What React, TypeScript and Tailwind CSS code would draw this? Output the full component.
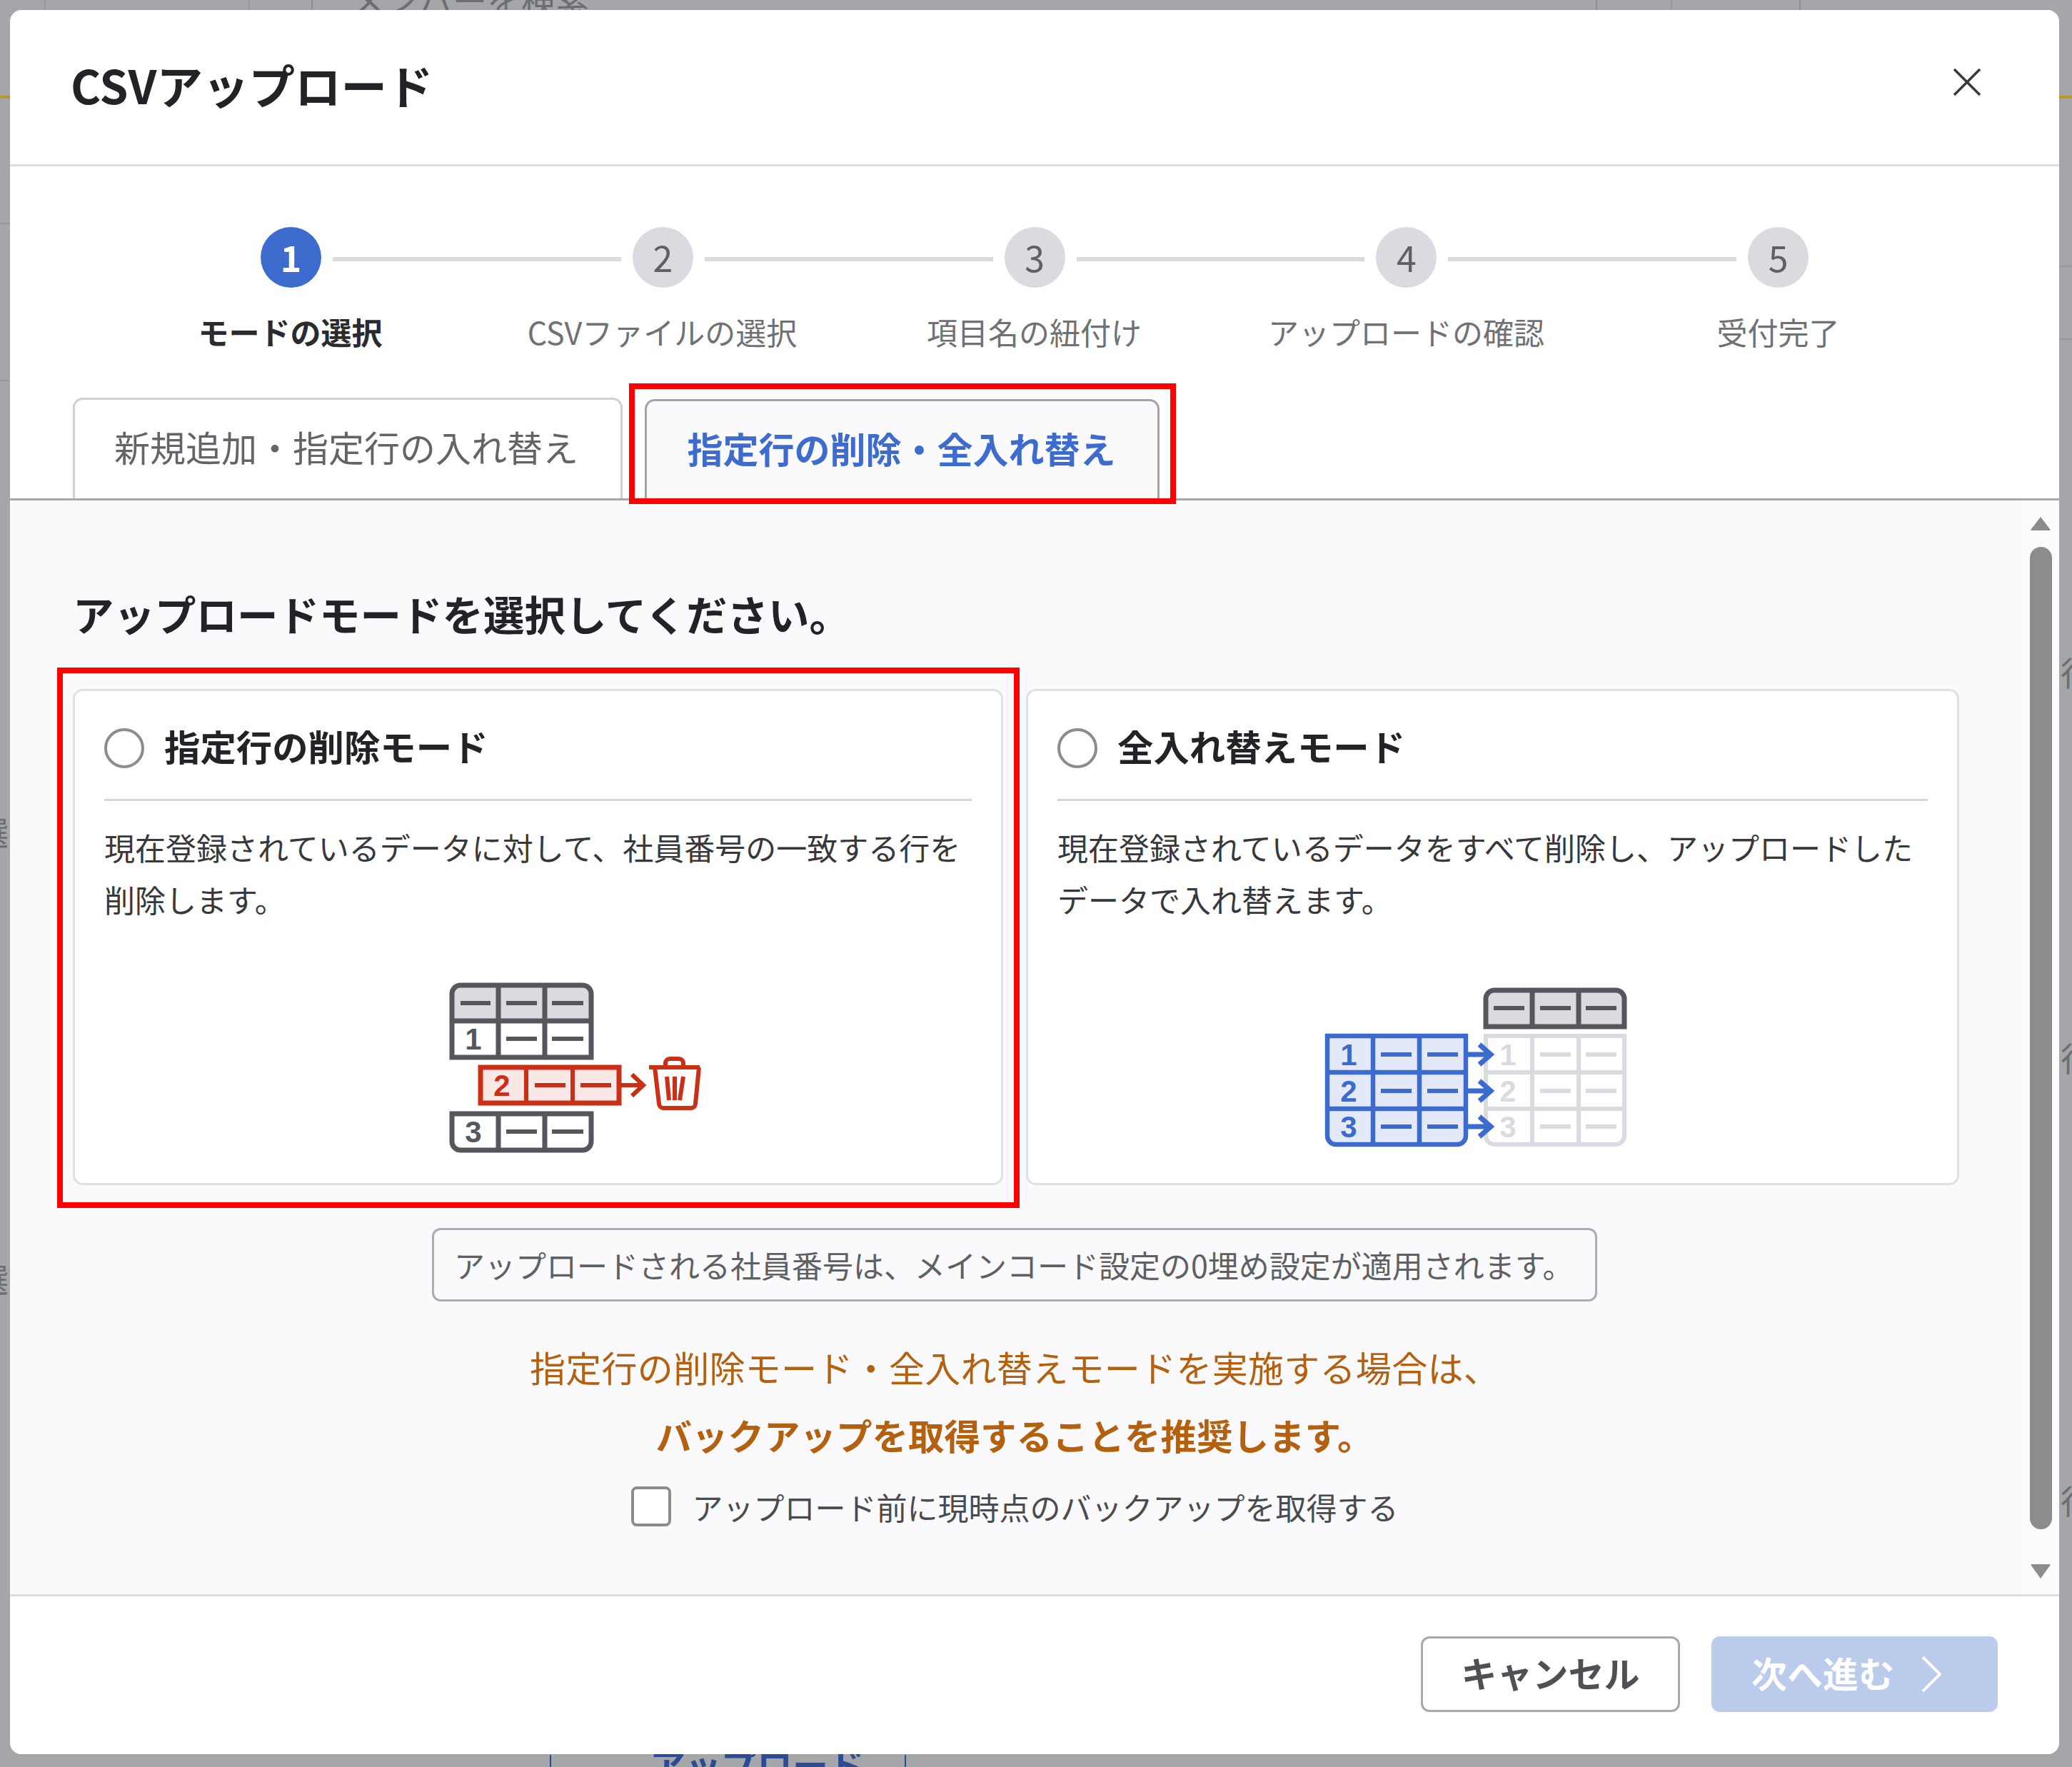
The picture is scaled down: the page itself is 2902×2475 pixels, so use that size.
const STEPS = [
  { no: "1", label: "モードの選択", active: true },
  { no: "2", label: "CSVファイルの選択", active: false },
  { no: "3", label: "項目名の紐付け", active: false },
  { no: "4", label: "アップロードの確認", active: false },
  { no: "5", label: "受付完了", active: false },
];

const GRAY = "#55575c";
const LIGHT = "#d9dbe0";
const RED = "#cb2f16";
const BLUE = "#3b6bcf";

function Dash({ x1, x2, y, color }: { x1: number; x2: number; y: number; color: string }) {
  return <line x1={x1} x2={x2} y1={y} y2={y} stroke={color} strokeWidth={6} />;
}

function Digit({ x, y, color, children }: { x: number; y: number; color: string; children: string }) {
  return (
    <text x={x} y={y} fill={color} fontSize={42} fontWeight={700} textAnchor="middle" fontFamily="'Liberation Sans', sans-serif">
      {children}
    </text>
  );
}

function DeleteIllustration() {
  return (
    <svg width={460} height={300} viewBox="0 0 460 300" fill="none" strokeLinecap="butt">
      <path d="M73 92V54a12 12 0 0 1 12-12h171a12 12 0 0 1 12 12v38z" fill={LIGHT} />
      <path d="M73 143V54a12 12 0 0 1 12-12h171a12 12 0 0 1 12 12v89zM70 92h201M138 42v101M203 42v101" stroke={GRAY} strokeWidth={7} />
      <Dash x1={85} x2={127} y={67} color={GRAY} />
      <Dash x1={149} x2={192} y={67} color={GRAY} />
      <Dash x1={213} x2={257} y={67} color={GRAY} />
      <Digit x={103} y={132} color={GRAY}>1</Digit>
      <Dash x1={149} x2={192} y={117} color={GRAY} />
      <Dash x1={213} x2={257} y={117} color={GRAY} />

      <rect x={113} y={157} width={194} height={50} fill="#f9e8e5" stroke={RED} strokeWidth={7} />
      <path d="M177 157v50M242 157v50" stroke={RED} strokeWidth={6} />
      <Digit x={143} y={197} color={RED}>2</Digit>
      <Dash x1={189} x2={232} y={182} color={RED} />
      <Dash x1={253} x2={296} y={182} color={RED} />
      <path d="M310 182h29M325 167l16 15-16 15" stroke={RED} strokeWidth={6} />
      <g transform="translate(-4 0)">
        <path d="M353 157h71M376 157v-6a6 6 0 0 1 6-6h13a6 6 0 0 1 6 6v6M361 157l6 51a6 6 0 0 0 6 6h39a6 6 0 0 0 6-6l5-51M378 170l3 33M389 170v33M401 170l-5 33" stroke={RED} strokeWidth={6} />
      </g>

      <path d="M73 222h195v39a12 12 0 0 1-12 12H85a12 12 0 0 1-12-12zM138 222v51M203 222v51" stroke={GRAY} strokeWidth={7} />
      <Digit x={103} y={262} color={GRAY}>3</Digit>
      <Dash x1={149} x2={192} y={247} color={GRAY} />
      <Dash x1={213} x2={257} y={247} color={GRAY} />
    </svg>
  );
}

function ReplaceIllustration() {
  return (
    <svg width={500} height={300} viewBox="0 0 500 300" fill="none">
      <path d="M262 100V61a12 12 0 0 1 12-12h170a12 12 0 0 1 12 12v39zM327 49v51M392 49v51" fill={LIGHT} stroke={GRAY} strokeWidth={7} />
      <Dash x1={273} x2={316} y={74} color={GRAY} />
      <Dash x1={338} x2={381} y={74} color={GRAY} />
      <Dash x1={402} x2={445} y={74} color={GRAY} />

      <path d="M262 113h194v140a12 12 0 0 1-12 12H274a12 12 0 0 1-12-12zM259 164h200M259 215h200M327 113v152M392 113v152" stroke={LIGHT} strokeWidth={6} />
      {[139, 190, 240].map((y) => (
        <g key={y}>
          <Dash x1={338} x2={381} y={y} color={LIGHT} />
          <Dash x1={402} x2={445} y={y} color={LIGHT} />
        </g>
      ))}
      <Digit x={293} y={154} color={LIGHT}>1</Digit>
      <Digit x={293} y={205} color={LIGHT}>2</Digit>
      <Digit x={293} y={255} color={LIGHT}>3</Digit>

      <path d="M40 113h194v140a12 12 0 0 1-12 12H52a12 12 0 0 1-12-12z" fill="#e3e9f7" />
      <path d="M40 113h194v140a12 12 0 0 1-12 12H52a12 12 0 0 1-12-12zM37 164h200M37 215h200M104 113v152M169 113v152" stroke={BLUE} strokeWidth={6.5} />
      {[139, 190, 240].map((y) => (
        <g key={y}>
          <Dash x1={115} x2={158} y={y} color={BLUE} />
          <Dash x1={180} x2={223} y={y} color={BLUE} />
          <path d={`M237 ${y}h30M253 ${y - 14}l16 14-16 14`} stroke={BLUE} strokeWidth={7} />
        </g>
      ))}
      <Digit x={70} y={154} color={BLUE}>1</Digit>
      <Digit x={70} y={205} color={BLUE}>2</Digit>
      <Digit x={70} y={255} color={BLUE}>3</Digit>
    </svg>
  );
}

function ModeCard({ title, lines, children }: { title: string; lines: string[]; children: React.ReactNode }) {
  return (
    <div className="w-full h-[695px] bg-white border-[3px] border-[#e0e1e5] rounded-[14px] px-[41px]">
      <div className="h-[154px] border-b-[3px] border-[#d4d5d9] flex items-center gap-[28px] pt-[14px] pb-[12px]">
        <span className="w-[56px] h-[56px] mt-[6px] rounded-full border-[4px] border-[#8c8c8e] bg-white" />
        <span className="text-[50.4px] font-bold text-[#222326] leading-[60px]">{title}</span>
      </div>
      <div className="pt-[28px] text-[43px] leading-[73px] text-[#37383c]">
        {lines.map((line) => (
          <p key={line}>{line}</p>
        ))}
      </div>
      {children}
    </div>
  );
}

export default function App() {
  return (
    <div className="relative w-[2902px] h-[2475px] overflow-hidden bg-[#a5a6a9] pl-[14px] pt-[14px] font-['Noto_Sans_CJK_JP','Liberation_Sans',sans-serif]">
      {/* page behind the dialog, only its edges show */}
      <div className="absolute left-[62px] top-0 h-[14px] w-[2px] bg-[#97989b]" />
      <div className="absolute left-[348px] top-0 h-[14px] w-[2px] bg-[#97989b]" />
      <div className="absolute left-[436px] top-0 h-[14px] w-[2px] bg-[#8d8e91]" />
      <div className="absolute left-[2235px] top-0 h-[14px] w-[2px] bg-[#8d8e91]" />
      <div className="absolute left-[2340px] top-0 h-[14px] w-[2px] bg-[#97989b]" />
      <div className="absolute left-[2520px] top-0 h-[14px] w-[2px] bg-[#8d8e91]" />
      <div className="absolute left-[490px] -top-[32px] text-[48px] leading-[60px] text-[#6d6e71]">メンバーを検索</div>
      <div className="absolute left-0 top-[134px] h-[4px] w-[14px] bg-[#b59a2a]" />
      <div className="absolute right-0 top-[134px] h-[4px] w-[18px] bg-[#b59a2a]" />
      <div className="absolute left-0 top-[312px] h-[2px] w-[14px] bg-[#95969a]" />
      <div className="absolute left-0 top-[532px] h-[2px] w-[14px] bg-[#95969a]" />
      <div className="absolute right-0 top-[372px] h-[2px] w-[18px] bg-[#95969a]" />
      <div className="absolute right-0 top-[474px] h-[2px] w-[18px] bg-[#95969a]" />
      <div className="absolute -left-[34px] top-[1134px] text-[46px] leading-[60px] text-[#6d6e71]">選</div>
      <div className="absolute -left-[34px] top-[1760px] text-[46px] leading-[60px] text-[#6d6e71]">選</div>
      <div className="absolute right-[-30px] top-[910px] text-[46px] leading-[60px] text-[#6d6e71]">行</div>
      <div className="absolute right-[-30px] top-[1450px] text-[46px] leading-[60px] text-[#6d6e71]">行</div>
      <div className="absolute right-[-30px] top-[2070px] text-[46px] leading-[60px] text-[#6d6e71]">行</div>
      <div className="absolute left-[770px] top-[2458px] h-[17px] w-[2px] bg-[#2d4b94]" />
      <div className="absolute left-[1267px] top-[2458px] h-[17px] w-[2px] bg-[#2d4b94]" />
      <div className="absolute left-[910px] top-[2440px] text-[50px] leading-[60px] font-bold text-[#2d4b94]">アップロード</div>

      <div className="relative flex flex-col w-[2870px] h-[2443px] bg-white rounded-[16px] overflow-hidden">
        <header className="h-[219px] shrink-0 border-b-[3px] border-[#dcdde0] flex items-center justify-between pl-[85px] pr-[109px] pb-[9px]">
          <h1 className="text-[64.5px] leading-[80px] font-bold text-[#222326]">CSVアップロード</h1>
          <svg className="mb-[5px]" width={40} height={40} viewBox="0 0 40 40" fill="none" stroke="#37383c" strokeWidth={3.5}>
            <path d="M2 2l36 36M38 2L2 38" />
          </svg>
        </header>

        <section className="shrink-0 pt-[85px]">
          <div className="flex items-center gap-[16px] ml-[351px] w-[2168px]">
            {STEPS.map((step, i) => (
              <div key={step.no} className="contents">
                {i > 0 && <div className="flex-1 h-[6px] mt-[5px] bg-[#d9dbe0]" />}
                <div
                  className={`w-[85px] h-[85px] pb-[3px] rounded-full flex items-center justify-center text-[50px] ${
                    step.active ? "bg-[#3d6cce] text-white font-bold" : "bg-[#d9dbe0] text-[#5f6064]"
                  }`}
                >
                  {step.no}
                </div>
              </div>
            ))}
          </div>
          <div className="flex ml-[132px] mt-[31px]">
            {STEPS.map((step) => (
              <div
                key={step.no}
                className={`w-[521px] text-center text-[43px] leading-[60px] ${
                  step.active ? "font-bold text-[#2a2b2e]" : "text-[#707175]"
                }`}
              >
                {step.label}
              </div>
            ))}
          </div>
        </section>

        <nav className="shrink-0 mt-[63px] h-[144px] flex items-end gap-[31px] pl-[88px] border-b-[3px] border-[#a8a8ab]">
          <div className="w-[770px] h-[141px] pb-[7px] pr-[4px] rounded-t-[14px] border-[3px] border-b-0 border-[#d0d1d4] bg-white flex items-center justify-center text-[50px] text-[#636468]">
            新規追加・指定行の入れ替え
          </div>
          <div className="relative w-[721px] h-[139px] pb-[5px] pr-[2px] rounded-t-[14px] border-[3px] border-b-0 border-[#a3a4a7] bg-[#fafafc] flex items-center justify-center text-[50px] font-bold text-[#3d6cce]">
            指定行の削除・全入れ替え
            <div className="absolute -left-[25px] -right-[26px] -top-[25px] -bottom-[8px] border-[8px] border-[#ff0000]" />
          </div>
        </nav>

        <main className="flex flex-1 min-h-0 bg-[#fafafc]">
          <div className="flex-1 pl-[88px] pt-[122px]">
            <h2 className="text-[57.5px] leading-[72px] font-bold text-[#222326]">アップロードモードを選択してください。</h2>
            <div className="flex gap-[32px] mt-[70px] w-[2642px]">
              <div className="relative w-[1303px]">
                <ModeCard title="指定行の削除モード" lines={["現在登録されているデータに対して、社員番号の一致する行を", "削除します。"]}>
                  <div className="mt-[42px] ml-[414px]">
                    <DeleteIllustration />
                  </div>
                </ModeCard>
                <div className="absolute -left-[22px] -right-[23px] -top-[30px] -bottom-[32px] border-[8px] border-[#ff0000]" />
              </div>
              <div className="w-[1307px]">
                <ModeCard title="全入れ替えモード" lines={["現在登録されているデータをすべて削除し、アップロードした", "データで入れ替えます。"]}>
                  <div className="mt-[42px] ml-[338px]">
                    <ReplaceIllustration />
                  </div>
                </ModeCard>
              </div>
            </div>

            <div className="w-[2638px] flex flex-col items-center">
              <div className="mt-[60px] w-[1632px] h-[103px] border-[3px] border-[#acadb0] rounded-[12px] flex items-center pl-[28px] text-[43px] text-[#5f6064] whitespace-nowrap">
                アップロードされる社員番号は、メインコード設定の0埋め設定が適用されます。
              </div>
              <p className="mt-[44px] text-[50px] leading-[95px] tracking-[0.3px] text-[#b5600e]">指定行の削除モード・全入れ替えモードを実施する場合は、</p>
              <p className="text-[50.5px] leading-[95px] font-bold text-[#b5600e]">バックアップを取得することを推奨します。</p>
              <label className="mt-[25px] flex items-center gap-[30px]">
                <span className="w-[56px] h-[56px] rounded-[8px] border-[4px] border-[#8c8c8e] bg-white" />
                <span className="text-[43px] leading-[56px] text-[#4a4b4f]">アップロード前に現時点のバックアップを取得する</span>
              </label>
            </div>
          </div>

          <div className="w-[52px] shrink-0 flex flex-col items-center pt-[22px] bg-[#fbfbfd]">
            <svg width={28} height={20} viewBox="0 0 28 20" fill="#8c8c8c">
              <path d="M14 1L27 18a1 1 0 0 1-1 2H2a1 1 0 0 1-1-2z" />
            </svg>
            <div className="w-[31px] h-[1376px] mt-[23px] rounded-full bg-[#8c8c8c]" />
            <svg className="mt-[48px]" width={28} height={22} viewBox="0 0 28 22" fill="#8c8c8c">
              <path d="M14 21L27 3a1 1 0 0 0-1-2H2a1 1 0 0 0-1 2z" />
            </svg>
          </div>
        </main>

        <footer className="shrink-0 h-[224px] border-t-[3px] border-[#dcdde0] bg-white flex justify-end gap-[44px] pt-[56px] pr-[86px]">
          <button className="w-[363px] h-[106px] pb-[5px] rounded-[12px] border-[3px] border-[#a8a9ac] bg-white text-[50px] font-bold text-[#4f5054]">
            キャンセル
          </button>
          <button className="w-[401px] h-[106px] pb-[5px] rounded-[12px] bg-[#bacbec] text-[50px] font-bold text-white flex items-center pl-[56px] gap-[38px]">
            次へ進む
            <svg className="mt-[5px]" width={28} height={50} viewBox="0 0 28 50" fill="none" stroke="white" strokeWidth={4}>
              <path d="M2 1l24 24L2 49" />
            </svg>
          </button>
        </footer>
      </div>
    </div>
  );
}
